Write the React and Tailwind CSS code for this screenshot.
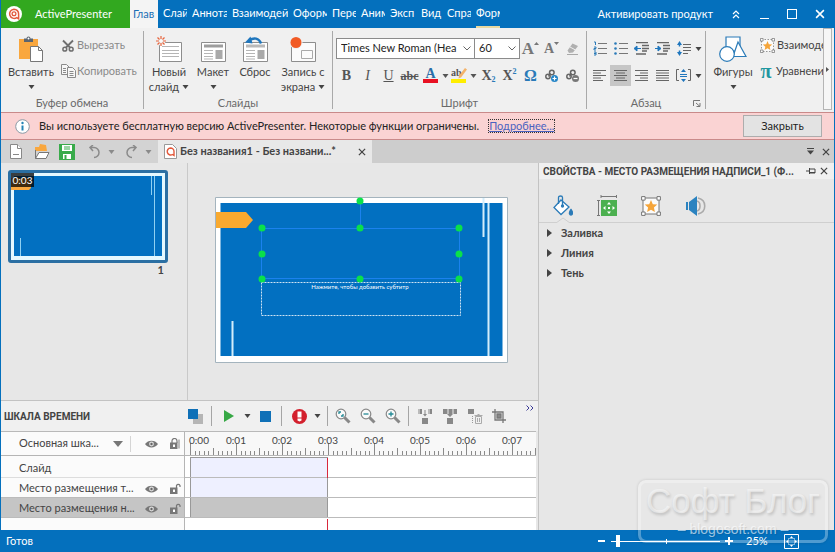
// ============================================================
// App.jsx
// Main editor window: ribbon, notice bar, slide list, canvas,
// timeline, properties panel and status bar.
// ============================================================

import React, { useState } from 'react'

// ── SMALL SHARED PIECES ──────────────────────────────────

// Down arrow used next to every drop-down command
const Caret = ({ className = '' }) => (
  <svg width="7" height="4" viewBox="0 0 7 4" className={`shrink-0 ${className}`}>
    <path d="M.5 0h6L3.500 4z" fill="currentColor" />
  </svg>
)

const Cross = ({ size = 9 }) => (
  <svg width={size} height={size} viewBox="0 0 9 9" stroke="currentColor" strokeWidth="1.400">
    <path d="M1 1l7 7M8 1l-7 7" />
  </svg>
)

// Ribbon group with its caption at the bottom
function Group({ title, className = '', children }) {
  return (
    <section className={`relative flex flex-col ${className}`}>
      <div className="h-[67px]">{children}</div>
      <h2 className="text-center leading-4 text-[#6a6a6a]">{title}</h2>
    </section>
  )
}

const Divider = () => <div className="my-[3px] w-px shrink-0 bg-[#a9a9a9]" />

// Large ribbon button: picture on top, label under it
function BigButton({ icon, label, second, className = '' }) {
  return (
    <button className={`flex shrink-0 flex-col items-center pt-2 leading-[15px] ${className}`}>
      <span className="flex h-7 items-start justify-center">{icon}</span>
      <span className="whitespace-nowrap">{label}</span>
      <span className="flex h-[15px] items-center gap-[3px] whitespace-nowrap">{second}<Caret /></span>
    </button>
  )
}

function IconButton({ label, active, className = 'w-[21px]', children }) {
  return (
    <button
      aria-label={label}
      className={`flex h-[21px] shrink-0 items-center justify-center ${active ? 'bg-[#c6c6c6]' : ''} ${className}`}
    >
      {children}
    </button>
  )
}

// ── RIBBON ICONS ─────────────────────────────────────────

const Logo = () => (
  <svg width="16" height="16" viewBox="0 0 16 16">
    <circle cx="8" cy="8" r="8" fill="#fff" />
    <path d="M8 3.200a4.600 4.600 0 1 0 2.800 8.400l1.800 1.200V8A4.600 4.600 0 0 0 8 3.200z" fill="none" stroke="#e2593c" strokeWidth="1.500" />
    <circle cx="8" cy="7.800" r="1.900" fill="none" stroke="#e2593c" strokeWidth="1.300" />
  </svg>
)

const PasteIcon = () => (
  <svg width="24" height="27" viewBox="0 0 24 27">
    <path d="M0 3h19v20H0z" fill="#f9a73e" />
    <path d="M5 2.500h2.500a2 2 0 0 1 4 0H14V6H5z" fill="#5b6570" />
    <circle cx="9.500" cy="2.500" r="1" fill="#fff" />
    <path d="M11.500 10.500h8l4 4v11h-12z" fill="#fff" stroke="#777" />
    <path d="M19.500 10.500v4h4" fill="none" stroke="#777" />
  </svg>
)

const ScissorsIcon = () => (
  <svg width="12" height="13" viewBox="0 0 12 13" fill="none" stroke="#6f6f6f" strokeWidth="1.500">
    <path d="M1 1.500l7 7M11 1.500l-7 7" strokeWidth="1.900" />
    <circle cx="2.800" cy="10.200" r="1.900" />
    <circle cx="9.200" cy="10.200" r="1.900" />
  </svg>
)

const CopyIcon = () => (
  <svg width="15" height="14" viewBox="0 0 15 14" fill="#f6f6f6" stroke="#8a8a8a">
    <path d="M.5.5h5l3 3v7h-8z" />
    <path d="M2 4.500h3M2 6.500h3M2 8.500h3" />
    <path d="M6.500 3.500h5l3 3v7h-8z" />
    <path d="M8.500 7.500h4M8.500 9.500h4M8.500 11.500h4" />
  </svg>
)

const NewSlideIcon = () => (
  <svg width="27" height="26" viewBox="0 0 27 26" fill="none">
    <path d="M3.500 6.500h22v19h-22z" fill="#fff" stroke="#8d8d8d" />
    <path d="M6 10.500h17M6 14.500h17M6 17.500h17M6 20.500h17" stroke="#b5b5b5" />
    <circle cx="5" cy="5" r="4.500" fill="#f0f0f0" />
    <path d="M5 0v3M5 7v3M0 5h3M7 5h3M1.500 1.500l2 2M6.500 6.500l2 2M8.500 1.500l-2 2M3.500 6.500l-2 2" stroke="#e8643c" strokeWidth="1.200" />
    <circle cx="5" cy="5" r="1" fill="#fff" />
  </svg>
)

const LayoutIcon = () => (
  <svg width="25" height="26" viewBox="0 0 25 26" fill="none">
    <path d="M.5 6.500h24v19H.5z" fill="#fff" stroke="#8d8d8d" />
    <path d="M3 8.500h19v3H3z" fill="#9d9d9d" />
    <path d="M3 14.500h9M3 17.500h9M3 20.500h9M3 23h9" stroke="#b5b5b5" />
    <path d="M14.500 14h7v9h-7z" fill="#a9a9a9" />
  </svg>
)

const ResetIcon = () => (
  <svg width="25" height="26" viewBox="0 0 25 26" fill="none">
    <path d="M.5 6.500h24v19H.5z" fill="#fff" stroke="#8d8d8d" />
    <path d="M3 8.500h19v3H3z" fill="#b9b9b9" />
    <path d="M3 14.500h9M3 17.500h9M3 20.500h9M3 23h9" stroke="#b5b5b5" />
    <path d="M14.500 14h7v9h-7z" fill="#a9a9a9" />
    <path d="M6 4.500C11 1 16 2 18 7.500" stroke="#1f76bd" strokeWidth="2.500" />
    <path d="M2 6.500L7.500.5l2 7z" fill="#1f76bd" />
  </svg>
)

const RecordIcon = () => (
  <svg width="26" height="26" viewBox="0 0 26 26" fill="none">
    <path d="M1.500 6.500h24v19h-24z" fill="#fbfbfb" stroke="#8d8d8d" />
    <path d="M11.500 14.500h11v8h-11z" stroke="#a9a9a9" />
    <circle cx="6" cy="6.500" r="6.500" fill="#f0f0f0" />
    <circle cx="6" cy="6.500" r="5.500" fill="#f15a24" />
  </svg>
)

const EraserIcon = () => (
  <svg width="13" height="14" viewBox="0 0 13 14">
    <path d="M1.500 8.500l5-7 5.500 2.500-5 6.500-4 .5z" fill="#b0b0b0" />
    <path d="M4 5l5.500 3" stroke="#f0f0f0" />
    <path d="M1 12.500h11" stroke="#a9a9a9" />
  </svg>
)

// Chain with a small plus or minus badge
const LinkIcon = ({ remove }) => (
  <svg width="14" height="14" viewBox="0 0 14 14" fill="none" stroke="#666" strokeWidth="1.500">
    <circle cx="6.800" cy="3.500" r="2.300" />
    <circle cx="3" cy="7.500" r="2.200" />
    <path d="M5.500 4.500l-2 3" />
    <circle cx="9.500" cy="9.500" r="3.500" fill={remove ? '#777' : '#2384c6'} stroke="none" />
    <path d={remove ? 'M7.500 9.500h4' : 'M7.500 9.500h4M9.500 7.500v4'} stroke="#fff" strokeWidth="1.200" />
  </svg>
)

const ListIcon = ({ numbered }) => (
  <svg width="14" height="15" viewBox="0 0 14 15">
    {numbered
      ? <path d="M1 1h1.500v3M1 6h2v1.500H1V9h2M1 11h2v3H1M1 12.500h2" fill="none" stroke="#2a7ab8" />
      : <g fill="#2a7ab8"><circle cx="1.500" cy="2.500" r="1.300" /><circle cx="1.500" cy="7.500" r="1.300" /><circle cx="1.500" cy="12.500" r="1.300" /></g>}
    <path d="M5 2.500h9M5 7.500h9M5 12.500h9" stroke="#777" />
  </svg>
)

const IndentIcon = ({ right }) => (
  <svg width="15" height="13" viewBox="0 0 15 13">
    <path d="M2 .5h12M8 3.500h7M8 6.500h7M8 9h5M2 12h10" stroke="#666" strokeWidth="1.300" />
    <path d={right ? 'M0 6.500h3.500M3 4l3 2.500L3 9z' : 'M2.500 6.500H7M3 4L0 6.500 3 9z'} stroke="#1f76bd" fill="#1f76bd" />
  </svg>
)

const SpacingIcon = () => (
  <svg width="14" height="15" viewBox="0 0 14 15">
    <path d="M2.500 2v3.500M2.500 9.500V13" stroke="#1f76bd" strokeWidth="1.500" />
    <path d="M0 4l2.500-4L5 4zM0 11l2.500 4L5 11z" fill="#1f76bd" />
    <path d="M6 3.500h8M6 6.500h8M6 9.500h8M6 12.500h5" stroke="#666" strokeWidth="1.200" />
  </svg>
)

const alignPaths = {
  left: 'M0 .5h13M0 3h8M0 5.500h13M0 8h8M0 10.500h10',
  center: 'M0 .5h13M2 3h9M0 5.500h13M2 8h9M0 10.500h13',
  right: 'M0 .5h13M5 3h8M0 5.500h13M5 8h8M0 10.500h13',
  justify: 'M0 .5h13M0 3h13M0 5.500h13M0 8h13M0 10.500h13',
}

const AlignIcon = ({ type }) => (
  <svg width="13" height="11" viewBox="0 0 13 11">
    <path d={alignPaths[type]} stroke="#666" strokeWidth="1.200" />
  </svg>
)

const VerticalAlignIcon = () => (
  <svg width="15" height="13" viewBox="0 0 15 13">
    <path d="M3 .5H.5v11H3M12 .5h2.500v11H12" fill="none" stroke="#666" />
    <path d="M7.500 0l2.500 3H5zM7.500 13L5 10h5z" fill="#1f76bd" />
    <path d="M4 5.500h7M4 7.500h7" stroke="#1f76bd" />
  </svg>
)

const ShapesIcon = () => (
  <svg width="28" height="27" viewBox="0 0 28 27" fill="#fff" stroke="#2b7bb8" strokeWidth="1.200">
    <path d="M7 1h14v14H7z" />
    <path d="M19 6l8 14.500H14z" />
    <circle cx="8" cy="18" r="7.300" />
  </svg>
)

const StarBox = ({ size, box = '#777' }) => (
  <svg width={size} height={size} viewBox="0 0 20 20" fill="none" stroke={box} className="shrink-0">
    <path d="M2 2h16v16H2z" fill="#fbfbfb" strokeDasharray={size < 18 ? '2 2' : ''} />
    <path d="M.6.6h3.500v3.500H.6zM16 .6h3.400v3.500H16zM.6 16h3.500v3.400H.6zM16 16h3.400v3.400H16z" fill="#fff" />
    <path d="M10 4l1.800 4.200 4.500.4-3.400 3 1 4.400-3.900-2.300L6.100 16l1-4.400-3.400-3 4.500-.4z" fill="#f5a53a" stroke="none" />
  </svg>
)

// ── TITLE BAR ────────────────────────────────────────────

const menuTabs = [
  { text: 'Слай', width: 'w-6' },
  { text: 'Аннота', width: 'w-[35px]' },
  { text: 'Взаимодей', width: 'w-[56px]' },
  { text: 'Оформ', width: 'w-[34px]' },
  { text: 'Пере', width: 'w-6' },
  { text: 'Аним', width: 'w-6' },
  { text: 'Эксп', width: 'w-[26px]' },
  { text: 'Вид', width: 'w-[21px]' },
  { text: 'Спра', width: 'w-6' },
  { text: 'Форм', width: 'w-6', marked: true },
]

function TitleBar() {
  return (
    <header className="flex h-7 text-white">
      <div className="flex w-[129px] shrink-0 items-center gap-[13px] bg-[#32a81f] pl-[5px]">
        <Logo />
        <span>ActivePresenter</span>
      </div>
      <nav className="flex gap-[5px]">
        <button className="w-7 overflow-hidden bg-[#f4f4f4] pl-[3px] text-left text-[#1a6fb5]">Глав</button>
        {menuTabs.map(t => (
          <button
            key={t.text}
            className={`overflow-hidden border-b-2 text-left whitespace-nowrap ${t.width} ${t.marked ? 'border-[#e9d9a0]' : 'border-transparent'}`}
          >
            {t.text}
          </button>
        ))}
      </nav>
      <div className="ml-auto flex items-center pr-[9px]">
        <button>Активировать продукт</button>
        <button aria-label="Свернуть ленту" className="ml-[19px]">
          <svg width="8" height="9" viewBox="0 0 8 9" fill="none" stroke="#fff" strokeWidth="1.200">
            <path d="M1 4l3-3 3 3M1 8l3-3 3 3" />
          </svg>
        </button>
        <button aria-label="Свернуть" className="ml-5 h-[10px] w-[9px] border-b border-white" />
        <button aria-label="Развернуть" className="ml-[18px] size-[10px] border border-white" />
        <button aria-label="Закрыть окно" className="ml-[18px]"><Cross size={10} /></button>
      </div>
    </header>
  )
}

// ── RIBBON ───────────────────────────────────────────────

const Chevron = () => (
  <svg width="8" height="5" viewBox="0 0 8 5" fill="none" stroke="#666" className="pointer-events-none absolute top-2 right-1">
    <path d="M.5.5L4 4 7.500.5" />
  </svg>
)

const GrowLetter = ({ up }) => (
  <span className="flex font-[Liberation_Serif,serif] font-bold text-[#777]">
    <span className={up ? 'text-[17px] leading-5' : 'text-sm leading-5'}>A</span>
    <svg width="5" height="3" viewBox="0 0 5 3" className="mt-[3px]">
      <path d={up ? 'M0 3L2.500 0 5 3z' : 'M0 0h5L2.500 3z'} fill="#777" />
    </svg>
  </span>
)

function FontGroup() {
  return (
    <Group title="Шрифт" className="w-[253px] shrink-0">
      <div className="flex h-[31px] items-center pt-[10px] pl-[3px]">
        <div className="relative flex">
          <select aria-label="Шрифт" className="h-[21px] w-[139px] appearance-none border border-[#8b8b8b] bg-white pr-4 pl-1 text-[#222]">
            <option>Times New Roman (Hea</option>
          </select>
          <Chevron />
        </div>
        <div className="relative -ml-px flex">
          <select aria-label="Размер" className="h-[21px] w-[46px] appearance-none border border-[#8b8b8b] bg-white pl-1 text-[#222]">
            <option>60</option>
          </select>
          <Chevron />
        </div>
        <IconButton label="Увеличить шрифт"><GrowLetter up /></IconButton>
        <IconButton label="Уменьшить шрифт"><GrowLetter /></IconButton>
        <IconButton label="Очистить"><EraserIcon /></IconButton>
      </div>
      <div className="flex items-center pt-[6px] pl-[3px] font-[Liberation_Serif,serif] text-sm font-bold text-[#555]">
        <IconButton label="Полужирный">B</IconButton>
        <IconButton label="Курсив"><i className="font-normal">I</i></IconButton>
        <IconButton label="Подчеркнутый"><u className="font-normal">U</u></IconButton>
        <IconButton label="Зачеркнутый"><s className="text-xs">abc</s></IconButton>
        <IconButton label="Цвет текста">
          <span className="h-[15px] w-[15px] border-b-4 border-[#e81123] leading-[12px] text-[#2a6ea8]">A</span>
        </IconButton>
        <IconButton label="Выбор цвета" className="w-2"><Caret /></IconButton>
        <IconButton label="Выделение" className="w-[19px]">
          <span className="relative h-[15px] w-[15px] border-b-4 border-[#ffee00] text-left text-[10px] leading-[9px]">
            ab
            <svg width="9" height="11" viewBox="0 0 9 11" className="absolute top-0 -right-px">
              <path d="M7 0l2 1.500-6 8-2.500 1 .5-3z" fill="#f3b36b" />
            </svg>
          </span>
        </IconButton>
        <IconButton label="Выбор выделения" className="w-[10px]"><Caret /></IconButton>
        <IconButton label="Подстрочный">X<span className="mt-2 text-[8px] text-[#2a7ab8]">2</span></IconButton>
        <IconButton label="Надстрочный">X<span className="mb-2 text-[8px] text-[#2a7ab8]">2</span></IconButton>
        <IconButton label="Символ"><span className="text-base text-[#2a7ab8]">Ω</span></IconButton>
        <IconButton label="Ссылка"><LinkIcon /></IconButton>
        <IconButton label="Удалить ссылку"><LinkIcon remove /></IconButton>
      </div>
    </Group>
  )
}

function Ribbon() {
  return (
    <div className="flex h-[84px] overflow-hidden bg-[#f0f0f0] text-[#444]">
      <Group title="Буфер обмена" className="w-[142px] shrink-0">
        <div className="flex">
          <BigButton icon={<PasteIcon />} label="Вставить" className="w-[60px]" />
          <div className="leading-4 text-[#8a8a8a]">
            <button className="mt-[9px] flex items-center gap-[3px] pl-[1px]"><ScissorsIcon />Вырезать</button>
            <button className="mt-[10px] flex items-center gap-px"><CopyIcon />Копировать</button>
          </div>
        </div>
      </Group>
      <Divider />
      <Group title="Слайды" className="w-[188px] shrink-0">
        <div className="flex">
          <BigButton icon={<NewSlideIcon />} label="Новый" second="слайд" className="w-[50px]" />
          <BigButton icon={<LayoutIcon />} label="Макет" className="w-[38px]" />
          <button className="flex w-[46px] flex-col items-center pt-2 leading-[15px]">
            <span className="h-7"><ResetIcon /></span>
            Сброс
          </button>
          <BigButton icon={<RecordIcon />} label="Запись с" second="экрана" className="w-[50px]" />
        </div>
      </Group>
      <Divider />
      <FontGroup />
      <Divider />
      <Group title="Абзац" className="w-[118px] shrink-0">
        <div className="flex pt-[10px] pl-[2px]">
          <IconButton label="Нумерация"><ListIcon numbered /></IconButton>
          <IconButton label="Маркеры"><ListIcon /></IconButton>
          <IconButton label="Уменьшить отступ"><IndentIcon /></IconButton>
          <IconButton label="Увеличить отступ"><IndentIcon right /></IconButton>
          <IconButton label="Интервал" className="w-[32px]"><SpacingIcon /><Caret className="ml-1" /></IconButton>
        </div>
        <div className="flex pt-[6px] pl-[2px]">
          <IconButton label="По левому краю"><AlignIcon type="left" /></IconButton>
          <IconButton label="По центру" active><AlignIcon type="center" /></IconButton>
          <IconButton label="По правому краю"><AlignIcon type="right" /></IconButton>
          <IconButton label="По ширине"><AlignIcon type="justify" /></IconButton>
          <IconButton label="По вертикали" className="w-[32px]"><VerticalAlignIcon /><Caret className="ml-1" /></IconButton>
        </div>
        <button aria-label="Параметры абзаца" className="absolute right-1 bottom-[5px]">
          <svg width="8" height="7" viewBox="0 0 8 7" fill="none" stroke="#777">
            <path d="M.5 6V.5H7M3 3l4 3.500M7 3v3.500H3.500" />
          </svg>
        </button>
      </Group>
      <Divider />
      <div className="flex min-w-0 flex-1 overflow-hidden">
        <BigButton icon={<ShapesIcon />} label="Фигуры" className="w-[54px]" />
        <div className="min-w-0 overflow-hidden leading-4 whitespace-nowrap">
          <button className="mt-[9px] flex items-center gap-[2px]"><StarBox size={15} />Взаимоде</button>
          <button className="mt-[10px] flex items-center gap-1">
            <span className="w-3 font-[Liberation_Serif,serif] text-xl leading-4 font-bold text-[#1f97a0]">π</span>Уравнени
          </button>
        </div>
      </div>
      <button aria-label="Прокрутить ленту" className="mr-[2px] mb-[2px] flex w-[9px] shrink-0 items-center justify-center border border-[#b5b5b5] bg-[#f6f6f6]">
        <svg width="3" height="5" viewBox="0 0 3 5"><path d="M0 0l3 2.500L0 5z" fill="#555" /></svg>
      </button>
    </div>
  )
}

// ── NOTICE ───────────────────────────────────────────────

function Notice({ onClose }) {
  return (
    <div className="flex h-7 items-center border-y border-[#c98a8a] bg-[#fad3d3] pr-3 pl-[14px] text-[#222]">
      <svg width="15" height="15" viewBox="0 0 15 15">
        <circle cx="7.500" cy="7.500" r="6.800" fill="#fff" stroke="#8a9aa5" />
        <path d="M7.500 6.500v5" stroke="#2384b6" strokeWidth="2" />
        <circle cx="7.500" cy="4" r="1.200" fill="#2384b6" />
      </svg>
      <span className="ml-[9px] whitespace-nowrap">
        Вы используете бесплатную версию ActivePresenter. Некоторые функции ограничены.
      </span>
      <a href="#more" className="ml-[9px] border border-dotted border-[#333] leading-3 text-[#4a62c0] underline">Подробнее...</a>
      <button onClick={onClose} className="ml-auto h-[22px] w-[79px] border border-[#adadad] bg-[#e3e3e3]">Закрыть</button>
    </div>
  )
}

// ── DOCUMENT TABS ────────────────────────────────────────

function DocumentBar() {
  return (
    <div className="flex h-[23px] items-center bg-[#cdcdcd] text-[#444]">
      <div className="flex h-full w-[157px] shrink-0 items-center bg-[#d3d3d3] pl-[9px]">
        <button aria-label="Создать">
          <svg width="12" height="15" viewBox="0 0 12 15" fill="#fff" stroke="#888">
            <path d="M.5.5h7l4 4v10H.5z" /><path d="M7.500.5v4h4M3 10.500h6" />
          </svg>
        </button>
        <button aria-label="Открыть" className="ml-3">
          <svg width="16" height="16" viewBox="0 0 16 16">
            <path d="M1 3h4l1-3 6 1 1 6H1z" fill="#f9a73e" />
            <path d="M1.500 14.500V6M1.500 14.500L5 8.500h10l-3 6z" fill="#fff" stroke="#777" />
          </svg>
        </button>
        <button aria-label="Сохранить" className="ml-[9px]">
          <svg width="16" height="16" viewBox="0 0 16 16">
            <path d="M0 0h16v16H0z" fill="#39ab4b" />
            <path d="M3 1h10v6H3zM4 10h8v5H4z" fill="#fff" />
            <path d="M5 3h6M5 5h6" stroke="#39ab4b" />
            <path d="M5.500 11h2v4h-2z" fill="#39ab4b" />
          </svg>
        </button>
        <button aria-label="Отменить" className="ml-[14px] flex items-center gap-2 text-[#8a8a8a]">
          <svg width="11" height="14" viewBox="0 0 11 14" fill="none" stroke="currentColor" strokeWidth="1.500">
            <path d="M1 2.500h4a5 5 0 0 1 0 10M4 0L1 2.500 4 6" />
          </svg>
          <Caret />
        </button>
        <button aria-label="Повторить" className="ml-[11px] flex items-center gap-2 text-[#8a8a8a]">
          <svg width="11" height="14" viewBox="0 0 11 14" fill="none" stroke="currentColor" strokeWidth="1.500">
            <path d="M10 2.500H6a5 5 0 0 0 0 10M7 0l3 2.500L7 6" />
          </svg>
          <Caret />
        </button>
      </div>
      <div className="flex h-full w-[214px] shrink-0 items-center bg-[#e8e8e8] pl-[6px] font-bold whitespace-nowrap">
        <svg width="13" height="15" viewBox="0 0 13 15" fill="#fff" stroke="#999">
          <path d="M.5.5h8l4 4v10H.5z" />
          <path d="M6.500 4a3.500 3.500 0 1 0 2 6.500l1.500 1V7.500A3.500 3.500 0 0 0 6.500 4z" fill="none" stroke="#e2593c" strokeWidth="1.400" />
        </svg>
        <span className="ml-[3px]">Без названия1 - Без названи...*</span>
        <button aria-label="Закрыть документ" className="mr-[6px] ml-auto"><Cross size={8} /></button>
      </div>
      <div className="ml-auto flex items-center gap-2 pr-1">
        <button aria-label="Список документов">
          <svg width="7" height="7" viewBox="0 0 7 7" fill="currentColor"><path d="M0 0h7v1H0zM0 2.500h7L3.500 6.500z" /></svg>
        </button>
        <button aria-label="Закрыть вкладку"><Cross size={8} /></button>
      </div>
    </div>
  )
}

// ── SLIDES ───────────────────────────────────────────────

function Thumbnail() {
  return (
    <button aria-label="Слайд 1" className="relative block h-[93px] w-40 rounded-[3px] border-[3px] border-[#2b6fa3] bg-[#e4f8ff]">
      <svg width="154" height="87" viewBox="0 0 154 87">
        <path d="M3 3h148v80H3z" fill="#0270c1" />
        <path d="M0 5h20v10l-2 2H0z" fill="#f9a73e" />
        <path d="M140.500 3v19M143.500 3v80M9.500 65v18" stroke="#8fd0f2" />
      </svg>
      <span className="absolute top-0 left-0 h-[14px] w-[23px] bg-black/75 text-[10px] leading-[14px] text-white">0:03</span>
    </button>
  )
}

const handles = [
  [145, 4], [47, 31], [145, 31], [244, 31], [47, 57], [244, 57], [47, 82], [145, 82], [244, 82],
]

function Slide() {
  return (
    <svg width="293" height="166" viewBox="0 0 293 166">
      <path d="M.5.5h292v165H.5z" fill="#fff" stroke="#a4b4be" />
      <path d="M5.500 6h282v153H5.500z" fill="#0270c1" />
      <path d="M1 15h30l7 8-7 8H1z" fill="#f9a92f" />
      <path d="M268.500 1v39M273.500 6v153M17.500 124v35" stroke="#d3edfb" strokeWidth="2" />
      <path d="M46.500 31.500h198v50h-198zM145.500 4v27" fill="none" stroke="#1b82ee" />
      <path d="M46.500 85.500h199v33h-199z" fill="none" stroke="#cfe3f3" strokeDasharray="2 1" />
      <text x="145" y="92" textAnchor="middle" fill="#fff" fontSize="6">
        Нажмите, чтобы добавить субтитр
      </text>
      {handles.map(([x, y]) => (
        <circle key={`${x}-${y}`} cx={x} cy={y} r="3.500" fill="#0be04a" />
      ))}
    </svg>
  )
}

// ── TIMELINE ─────────────────────────────────────────────

const Eye = () => (
  <svg width="13" height="8" viewBox="0 0 13 8">
    <path d="M0 4C3-.5 10-.5 13 4 10 8.500 3 8.500 0 4z" fill="#777" />
    <circle cx="6.500" cy="4" r="2.400" fill="#ddd" />
    <circle cx="6.500" cy="4" r="1.200" fill="#666" />
  </svg>
)

const Lock = ({ open }) => (
  <svg width="12" height="11" viewBox="0 0 12 11">
    <path d={open ? 'M7.500 5V2.500a2 2 0 0 1 3.500 0V4' : 'M3 5V3a2.500 2.500 0 0 1 5 0v2'} fill="none" stroke="#777" strokeWidth="1.200" />
    {!open && <path d="M9 1.500h2v9H9z" fill="#bbb" />}
    <path d="M1 4.500h7.500V11H1z" fill="#777" />
    <path d="M4 6.500h2v2.500H4z" fill="#fff" />
  </svg>
)

const Magnifier = ({ sign }) => (
  <svg width="16" height="16" viewBox="0 0 16 16" fill="none">
    <path d="M9.500 9.500l5 5" stroke="#888" strokeWidth="3" />
    <circle cx="6" cy="6" r="4.800" fill="#fafafa" stroke="#888" strokeWidth="1.200" />
    <path d={sign} stroke="#258a96" strokeWidth="1.300" />
  </svg>
)

const rows = [
  { name: 'Слайд', slide: true },
  { name: 'Место размещения т...' },
  { name: 'Место размещения н...', selected: true },
]

const SECOND = 46 // Pixels per second on the ruler

function Ruler() {
  const ticks = Array.from({ length: 76 }, (_, i) => i)
  return (
    <svg width="352" height="24" className="block">
      {ticks.map(i => {
        const x = 5.5 + Math.round(i * SECOND / 10)
        const top = i % 10 === 0 ? 11 : i % 5 === 0 ? 16 : 19
        return <path key={i} d={`M${x} ${top}V23`} stroke="#8a8a8a" />
      })}
      {ticks.filter(i => i % 10 === 0).map(i => (
        <text
          key={i}
          x={i ? 5 + i * SECOND / 10 : 14}
          y="12"
          textAnchor="middle"
          fontSize="10"
          fill="#444"
        >
          0:0{i / 10}
        </text>
      ))}
    </svg>
  )
}

const Bar = ({ className }) => <span className={`h-5 w-px shrink-0 bg-[#a5a5a5] ${className}`} />

function TimelineTools() {
  return (
    <div className="flex h-[30px] items-center bg-[#f0f0f0] pr-1 text-[#444]">
      <h2 className="w-[187px] shrink-0 pl-[3px] font-[Roboto,sans-serif] text-[10px] font-bold">ШКАЛА ВРЕМЕНИ</h2>
      <button aria-label="Слои">
        <svg width="15" height="15" viewBox="0 0 15 15"><path d="M5 5h10v10H5z" fill="#b5b5b5" /><path d="M0 0h10v10H0z" fill="#0f70b7" /></svg>
      </button>
      <Bar className="ml-2" />
      <button aria-label="Воспроизвести" className="ml-3 flex items-center gap-[10px]">
        <svg width="10" height="12" viewBox="0 0 10 12"><path d="M0 0l10 6-10 6z" fill="#37a845" /></svg>
        <Caret />
      </button>
      <button aria-label="Стоп" className="ml-[9px] size-[11px] bg-[#0f70b7]" />
      <Bar className="ml-[10px]" />
      <button aria-label="Запись" className="ml-[10px] flex items-center gap-[7px]">
        <svg width="15" height="15" viewBox="0 0 15 15">
          <circle cx="7.500" cy="7.500" r="7.500" fill="#d3202d" />
          <path d="M5.500 2.500h4v6h-4zM5.500 9.500h4v2l-2 1-2-1z" fill="#fff" />
        </svg>
        <Caret />
      </button>
      <Bar className="ml-[6px]" />
      <div className="ml-[7px] flex gap-[9px]">
        <button aria-label="По размеру"><Magnifier sign="M4 6V4h2M8 6v2H6" /></button>
        <button aria-label="Уменьшить"><Magnifier sign="M3.500 6h5" /></button>
        <button aria-label="Увеличить"><Magnifier sign="M3.500 6h5M6 3.500v5" /></button>
      </div>
      <Bar className="ml-[7px]" />
      <div className="ml-2 flex gap-[9px]">
        <button aria-label="Разделить">
          <svg width="16" height="16" viewBox="0 0 16 16" fill="#888">
            <path d="M1 1h4v5H1zM11 1h4v5h-4z" fill="#bbb" /><path d="M3 1h2v5H3zM13 1h2v5h-2zM7.500 2h1v4H10L8 8.500 6 6h1.500zM5 10h6v6H5z" />
          </svg>
        </button>
        <button aria-label="Объединить">
          <svg width="16" height="16" viewBox="0 0 16 16" fill="#888">
            <path d="M1 1h4v5H1zM7 1h3v5H7zM12 1h3v5h-3z" /><path d="M5 1h2v5H5zM10 1h2v5h-2z" fill="#bbb" /><path d="M5 6h6L8 9zM5 10h6v6H5z" />
          </svg>
        </button>
        <button aria-label="Удалить отрезок">
          <svg width="16" height="16" viewBox="0 0 16 16" fill="none">
            <path d="M1 1h6v5H1z" fill="#888" /><path d="M5.500 8v8" stroke="#999" strokeDasharray="1 1" />
            <path d="M8.500 8.500h6v7h-6zM7.500 7.500h8M10.500 6.500h2M10.500 10v4M12.500 10v4" stroke="#aaa" />
          </svg>
        </button>
        <button aria-label="Обрезать">
          <svg width="14" height="14" viewBox="0 0 14 14" fill="none" stroke="#777" strokeWidth="1.300">
            <path d="M3 0v11h11M0 3h11v11" /><path d="M5 5h4v4H5z" fill="#888" />
          </svg>
        </button>
      </div>
      <button aria-label="Ещё" className="mb-4 ml-auto">
        <svg width="8" height="6" viewBox="0 0 8 6" fill="none" stroke="#3c3c98"><path d="M.5.5L3 3 .5 5.500M4.500.5L7 3 4.500 5.500" /></svg>
      </button>
    </div>
  )
}

function Timeline() {
  return (
    <section className="border-t border-[#c3c3c3]">
      <TimelineTools />
      <div className="mr-[2px] flex h-[99px] border-t border-[#b9b9b9] bg-white text-[#444]">
        {/* Track names */}
        <div className="w-[184px] shrink-0 border-r border-[#b5b5b5] bg-[#fbfbfb]">
          <div className="flex h-6 items-center border-b border-[#b5b5b5] pl-[18px]">
            <span className="w-[94px] whitespace-nowrap">Основная шка...</span>
            <svg width="10" height="6" viewBox="0 0 10 6"><path d="M0 0h10L5 6z" fill="#777" /></svg>
            <span className="ml-[7px] h-4 w-px bg-[#d5d5d5]" />
            <span className="ml-[14px]"><Eye /></span>
            <span className="ml-[11px]"><Lock /></span>
          </div>
          {rows.map(row => (
            <div
              key={row.name}
              className={`flex items-center border-b pl-[18px] ${row.slide ? 'h-[22px] border-[#ddd] pt-1' : 'h-5 border-[#bbb] pt-[2px]'} ${row.selected ? 'bg-[#c5c5c5]' : ''}`}
            >
              <span className="w-[126px] whitespace-nowrap">{row.name}</span>
              {!row.slide && <Eye />}
              {!row.slide && <span className="ml-[11px]"><Lock open /></span>}
            </div>
          ))}
        </div>
        {/* Ruler and clips */}
        <div className="relative min-w-0 flex-1 overflow-hidden">
          <div className="h-6 border-b border-[#b5b5b5] bg-[#f8f8f8]"><Ruler /></div>
          {rows.map(row => (
            <div key={row.name} className={`border-b border-[#bbb] pl-[5px] ${row.slide ? 'h-[22px] pt-px' : 'h-5'}`}>
              <div className={`h-full w-[138px] border-x border-[#999] ${row.slide ? 'border-t' : ''} ${row.selected ? 'bg-[#c5c5c5]' : 'bg-[#eef0ff]'}`} />
            </div>
          ))}
          <span className="absolute top-[26px] left-[142px] h-5 w-px bg-[#d8283c]" />
          <span className="absolute top-[87px] bottom-0 left-[142px] w-px bg-[#d8283c]" />
        </div>
      </div>
    </section>
  )
}

// ── PROPERTIES ───────────────────────────────────────────

function Properties() {
  return (
    <aside className="relative w-[296px] shrink-0 border-l border-[#c3c3c3] bg-[#e7e7e7] text-[#444]">
      <div className="flex h-4 items-center bg-[#f0f0f0] pr-[6px] pl-1">
        <h2 className="font-[Roboto,sans-serif] text-[10px] font-bold whitespace-nowrap">
          СВОЙСТВА - МЕСТО РАЗМЕЩЕНИЯ НАДПИСИ_1 (Ф...
        </h2>
        <button aria-label="Закрепить" className="ml-auto">
          <svg width="10" height="8" viewBox="0 0 10 8" fill="none" stroke="currentColor"><path d="M0 4h3.500M3.500 1v6M3.500 2H9v4H3.500M3.500 5.500H9" /></svg>
        </button>
        <button aria-label="Закрыть панель" className="ml-1"><Cross size={8} /></button>
      </div>
      <div className="flex h-11 items-end gap-6 border-b border-[#cfcfcf] pb-[6px] pl-[14px]">
        <button aria-label="Стиль">
          <svg width="20" height="21" viewBox="0 0 20 21" fill="none" stroke="#2b7bb8" strokeWidth="1.300">
            <path d="M8 5l8 7-8 7.500-7-7z" fill="#fff" />
            <path d="M5.500 9V2.500C5.500.5 9.500.5 9.500 2.500V11" />
            <circle cx="9.500" cy="11" r="1" fill="#2b7bb8" />
            <path d="M18 14.500c3 4 1 5.500 0 5.500s-3-1.500 0-5.500z" fill="#2b7bb8" />
          </svg>
        </button>
        <button aria-label="Размер и положение">
          <svg width="20" height="21" viewBox="0 0 20 21" fill="none">
            <path d="M4 1.500h16M4 0v3M19.500 0v3M1.500 5v15.500M0 5.500h3M0 20.500h3" stroke="#777" />
            <path d="M4 5h16v16H4z" fill="#4cb050" />
            <path d="M12 7l2 2.500h-4zM12 19l-2-2.500h4zM6 13l2.500-2v4zM18 13l-2.500 2v-4zM11 12h2v2h-2z" fill="#fff" />
          </svg>
        </button>
        <button aria-label="Интерактивность"><StarBox size={20} /></button>
        <button aria-label="Звук">
          <svg width="22" height="20" viewBox="0 0 22 20" fill="none">
            <path d="M12 5c4 1 4 9 0 10M13 2c9 2 9 14 0 16" stroke="#aaa" strokeWidth="1.600" />
            <path d="M1 6h2v8H1zM4 6l8-6v20l-8-6z" fill="#2b83c0" />
          </svg>
        </button>
      </div>
      {/* Pointer under the selected tab */}
      <svg width="14" height="6" viewBox="0 0 14 6" className="absolute top-[54px] left-[17px]">
        <path d="M0 6l7-5 7 5" fill="#e7e7e7" stroke="#cfcfcf" />
      </svg>
      <ul className="leading-5 font-bold">
        {['Заливка', 'Линия', 'Тень'].map(name => (
          <li key={name}>
            <button className="flex h-5 items-center gap-[9px] pl-2">
              <svg width="5" height="8" viewBox="0 0 5 8"><path d="M0 0l5 4-5 4z" fill="#444" /></svg>
              {name}
            </button>
          </li>
        ))}
      </ul>
    </aside>
  )
}

// ── STATUS BAR ───────────────────────────────────────────

function StatusBar() {
  const [zoom, setZoom] = useState(5)

  return (
    <footer className="flex h-[22px] items-center pr-[35px] pl-[5px] text-white">
      <span>Готов</span>
      <button aria-label="Отдалить" className="ml-auto h-[2px] w-[7px] bg-white" />
      <div className="relative ml-[6px] flex w-[109px] items-center">
        <input
          type="range"
          aria-label="Масштаб"
          value={zoom}
          onChange={e => setZoom(Number(e.target.value))}
          className="h-3 w-full appearance-none bg-transparent [&::-webkit-slider-runnable-track]:h-px [&::-webkit-slider-runnable-track]:bg-white [&::-webkit-slider-thumb]:-mt-[6px] [&::-webkit-slider-thumb]:h-3 [&::-webkit-slider-thumb]:w-1 [&::-webkit-slider-thumb]:appearance-none [&::-webkit-slider-thumb]:bg-white"
        />
        <span className="absolute left-1/2 h-[5px] w-px bg-white" />
      </div>
      <button aria-label="Приблизить" className="ml-[5px]">
        <svg width="8" height="8" viewBox="0 0 8 8"><path d="M0 4h8M4 0v8" stroke="#fff" strokeWidth="2" /></svg>
      </button>
      <span className="ml-[13px] w-[38px]">25%</span>
      <button aria-label="Вписать">
        <svg width="15" height="15" viewBox="0 0 15 15" fill="none" stroke="#fff">
          <path d="M.5.5h14v14H.5z" />
          <path d="M7.500 2l1.500 2H6zM7.500 13L6 11h3zM2 7.500L4 6v3zM13 7.500L11 9V6z" fill="#fff" stroke="none" />
          <path d="M4.500 4.500h6v6h-6z" strokeDasharray="1 1" />
        </svg>
      </button>
    </footer>
  )
}

// Site mark drawn over the lower right corner
const Watermark = () => (
  <div className="pointer-events-none absolute right-[7px] bottom-[9px] flex h-[63px] w-[190px] flex-col items-center rounded-lg border-[3px] border-white/30 font-[Liberation_Sans,sans-serif] text-white/50 shadow-[0_0_3px_rgba(0,0,0,0.15)]">
    <span className="text-[35px] leading-9 whitespace-nowrap [text-shadow:1px_2px_3px_rgba(0,0,0,0.18)]">Софт Блог</span>
    <span className="text-sm leading-5 whitespace-nowrap text-white/60 [text-shadow:1px_1px_1px_rgba(0,0,0,0.1)]">– blogosoft.com –</span>
  </div>
)

// ── PAGE ─────────────────────────────────────────────────

export default function App() {
  const [notice, setNotice] = useState(true)

  return (
    <div className="relative flex min-h-screen flex-col bg-[#0470bd] px-px font-[Lato,sans-serif] text-[11px]">
      <TitleBar />
      <Ribbon />
      {notice && <Notice onClose={() => setNotice(false)} />}
      <DocumentBar />
      <main className="flex flex-1 bg-[#e7e7e7]">
        <div className="flex min-w-0 flex-1 flex-col">
          <div className="flex flex-1">
            <div className="w-[187px] shrink-0 border-r border-[#c9c9c9] pt-[7px] pl-[7px]">
              <Thumbnail />
              <p className="w-[156px] text-right leading-[14px] font-bold text-[#444]">1</p>
            </div>
            <div className="flex flex-1 items-center justify-center pr-[3px] pb-1">
              <Slide />
            </div>
          </div>
          <Timeline />
        </div>
        <Properties />
      </main>
      <StatusBar />
      <Watermark />
    </div>
  )
}
